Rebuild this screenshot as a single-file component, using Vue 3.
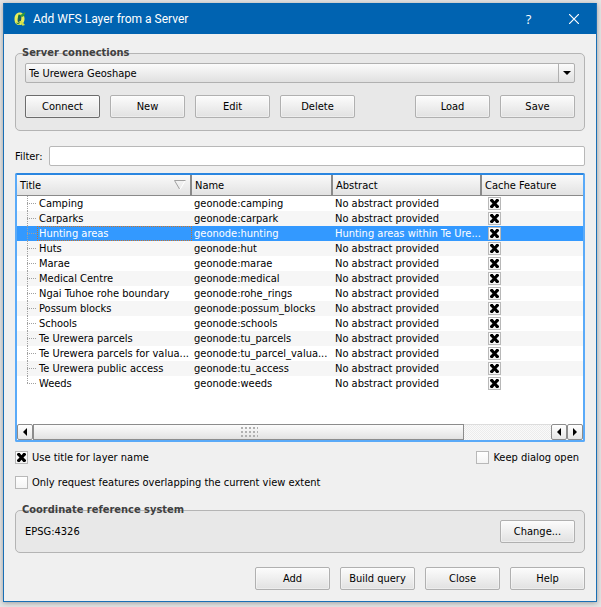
<script setup>
import { ref } from 'vue'

const connection = ref('Te Urewera Geoshape')
const filter = ref('')
const selected = ref('geonode:hunting')
const useTitle = ref(true)
const keepOpen = ref(false)
const onlyExtent = ref(false)

const none = 'No abstract provided'
const layers = ref([
  { title: 'Camping', name: 'geonode:camping', abstract: none, cache: true },
  { title: 'Carparks', name: 'geonode:carpark', abstract: none, cache: true },
  { title: 'Hunting areas', name: 'geonode:hunting', abstract: 'Hunting areas within Te Ure...', cache: true },
  { title: 'Huts', name: 'geonode:hut', abstract: none, cache: true },
  { title: 'Marae', name: 'geonode:marae', abstract: none, cache: true },
  { title: 'Medical Centre', name: 'geonode:medical', abstract: none, cache: true },
  { title: 'Ngai Tuhoe rohe boundary', name: 'geonode:rohe_rings', abstract: none, cache: true },
  { title: 'Possum blocks', name: 'geonode:possum_blocks', abstract: none, cache: true },
  { title: 'Schools', name: 'geonode:schools', abstract: none, cache: true },
  { title: 'Te Urewera parcels', name: 'geonode:tu_parcels', abstract: none, cache: true },
  { title: 'Te Urewera parcels for valua...', name: 'geonode:tu_parcel_valua...', abstract: none, cache: true },
  { title: 'Te Urewera public access', name: 'geonode:tu_access', abstract: none, cache: true },
  { title: 'Weeds', name: 'geonode:weeds', abstract: none, cache: true },
])
</script>

<template>
  <main class="dialog">
    <header class="titlebar">
      <svg class="logo" viewBox="0 0 14 16" aria-hidden="true">
        <path d="M8 1.500C4 1 1.500 3.500 1.500 8s2 6 5 6 5-2.500 5-6.500c0-2-1-4-2-5z" fill="#e8ee5a" />
        <ellipse cx="6.500" cy="7.800" rx="1.800" ry="4" fill="#1d5f66" transform="rotate(8 6.500 7.800)" />
        <path d="M6.500 4.500 12.500 1l-1.500 4-2 1z" fill="#2f9a3c" />
        <path d="M6 10 8.500 10l3.500 4-2.500.8z" fill="#cfe04a" />
        <path d="M6 3.500 5.500 8M3.500 12l3 1" stroke="#1f7a35" fill="none" />
      </svg>
      <h1>Add WFS Layer from a Server</h1>
      <button class="cap help" aria-label="Context help">?</button>
      <button class="cap" aria-label="Close window">
        <svg width="10" height="10" viewBox="0 0 10 10"><path d="M0 0 10 10M10 0 0 10" stroke="#fff" stroke-width="1.200" /></svg>
      </button>
    </header>

    <div class="body">
      <fieldset class="group">
        <legend>Server connections</legend>
        <div class="combo">
          <select v-model="connection" aria-label="Server connection">
            <option>Te Urewera Geoshape</option>
          </select>
          <svg class="arrow" viewBox="0 0 8 4" aria-hidden="true"><path d="M0 0h8L4 4z" /></svg>
        </div>
        <div class="buttons">
          <button class="btn primary">Connect</button>
          <button class="btn">New</button>
          <button class="btn">Edit</button>
          <button class="btn">Delete</button>
          <span class="spacer"></span>
          <button class="btn">Load</button>
          <button class="btn">Save</button>
        </div>
      </fieldset>

      <div class="filter">
        <label for="filter">Filter:</label>
        <input id="filter" v-model="filter" type="text" />
      </div>

      <div class="tree">
        <table>
          <colgroup>
            <col class="c-title" /><col class="c-name" /><col class="c-abstract" /><col />
          </colgroup>
          <thead>
            <tr>
              <th>
                <span class="sorted">Title
                  <svg width="12" height="10" viewBox="0 0 12 10" aria-hidden="true">
                    <path d="M11 1 6 9.500" stroke="#fff" fill="none" />
                    <path d="M11.500.5H.5L5.500 9" stroke="#a0a0a0" fill="none" />
                  </svg>
                </span>
              </th>
              <th>Name</th>
              <th>Abstract</th>
              <th>Cache Feature</th>
            </tr>
          </thead>
          <tbody>
            <tr v-for="l in layers" :key="l.name" :class="{ selected: l.name === selected }" @click="selected = l.name">
              <td class="title"><span class="item">{{ l.title }}</span></td>
              <td class="name">{{ l.name }}</td>
              <td class="abstract">{{ l.abstract }}</td>
              <td class="cache"><input v-model="l.cache" type="checkbox" :aria-label="'Cache ' + l.title" /></td>
            </tr>
          </tbody>
        </table>
        <div class="scrollbar">
          <button class="step" aria-label="Scroll left"><svg width="4" height="8" viewBox="0 0 4 8"><path d="M4 0v8L0 4z" /></svg></button>
          <div class="thumb"><span class="grip"></span></div>
          <div class="track"></div>
          <button class="step" aria-label="Scroll left"><svg width="4" height="8" viewBox="0 0 4 8"><path d="M4 0v8L0 4z" /></svg></button>
          <button class="step" aria-label="Scroll right"><svg width="4" height="8" viewBox="0 0 4 8"><path d="M0 0v8l4-4z" /></svg></button>
        </div>
      </div>

      <div class="options">
        <label><input v-model="useTitle" type="checkbox" />Use title for layer name</label>
        <label class="keep"><input v-model="keepOpen" type="checkbox" />Keep dialog open</label>
      </div>
      <div class="options second">
        <label><input v-model="onlyExtent" type="checkbox" />Only request features overlapping the current view extent</label>
      </div>

      <fieldset class="group crs">
        <legend>Coordinate reference system</legend>
        <span>EPSG:4326</span>
        <button class="btn">Change...</button>
      </fieldset>

      <footer class="buttons actions">
        <button class="btn">Add</button>
        <button class="btn">Build query</button>
        <button class="btn">Close</button>
        <button class="btn">Help</button>
      </footer>
    </div>
  </main>
</template>

<style>
body {
  background: #e4e4e4;
}
#app {
  box-sizing: border-box;
  min-height: 100vh;
  display: flex;
  padding: 3px 4px 5px 3px;
}
</style>

<style scoped>
* {
  box-sizing: border-box;
}
.dialog {
  flex: 1;
  min-width: 0;
  display: flex;
  flex-direction: column;
  border: 1px solid #1a6fb5;
  border-top: 0;
  background: #f0f0f0;
  box-shadow: 0 1px 5px #00000050;
  color: #000;
  font: 11px/15px "DejaVu Sans Condensed", "DejaVu Sans", sans-serif;
}
button,
input,
select {
  font: inherit;
  color: inherit;
  margin: 0;
}
.titlebar {
  display: flex;
  align-items: center;
  height: 31px;
  padding-left: 9px;
  background: #0063b1;
  color: #fff;
}
.logo {
  width: 14px;
  height: 16px;
}
h1 {
  flex: 1;
  margin: 0 0 0 6px;
  font: 12px/16px Roboto, sans-serif;
}
.cap {
  width: 45px;
  height: 31px;
  padding: 0;
  border: 0;
  background: none;
  display: grid;
  place-items: center;
}
.help {
  font: 13px/16px "Open Sans", sans-serif;
}
.body {
  flex: 1;
  display: flex;
  flex-direction: column;
  padding: 19px 11px 11px;
}
.group {
  position: relative;
  min-width: 0;
  margin: 0;
  padding: 9px;
  border: 1px solid #b4b4b4;
  border-radius: 5px;
  background: #e8e8e8;
}
.group:first-child {
  padding-bottom: 12px;
}
legend {
  position: absolute;
  top: -9px;
  left: 6px;
  padding: 0;
  font-weight: bold;
  color: #404040;
}
.combo {
  position: relative;
}
select {
  display: block;
  width: 100%;
  height: 20px;
  padding: 0 20px 0 3px;
  appearance: none;
  border: 1px solid #b0b0b0;
  border-radius: 2px;
  background: linear-gradient(#fbfbfb, #e0e0e0);
}
.combo::after {
  content: "";
  position: absolute;
  top: 1px;
  right: 16px;
  bottom: 1px;
  border-left: 1px solid #b0b0b0;
}
.arrow {
  position: absolute;
  right: 4px;
  top: 8px;
  width: 8px;
  height: 4px;
  pointer-events: none;
}
.buttons {
  display: flex;
  gap: 10px;
  margin-top: 12px;
}
.spacer {
  flex: 1;
}
.btn {
  width: 75px;
  height: 23px;
  padding: 0;
  border: 1px solid #b0b0b0;
  border-radius: 2px;
  background: linear-gradient(#fcfcfc, #e1e1e1);
  box-shadow: inset 0 0 0 1px #ffffff60;
}
.primary {
  border-color: #6c6c6c;
}
.filter {
  display: flex;
  align-items: center;
  gap: 6px;
  margin-top: 15px;
}
.filter input {
  flex: 1;
  min-width: 0;
  height: 20px;
  padding: 0 4px;
  border: 1px solid #b8b8b8;
  border-radius: 2px;
  background: #fff;
}
.tree {
  flex: 1;
  display: flex;
  flex-direction: column;
  margin-top: 7px;
  border: 2px solid #5aaaf8;
  border-top-color: #2a86e0;
  border-radius: 2px;
  background: #fff;
}
table {
  width: 100%;
  table-layout: fixed;
  border-collapse: separate;
  border-spacing: 0;
}
.c-title {
  width: 175px;
}
.c-name {
  width: 141px;
}
.c-abstract {
  width: 149px;
}
th {
  height: 21px;
  padding: 0 4px 0 3px;
  border-right: 2px solid #8a8a8a;
  border-bottom: 1px solid #8a8a8a;
  background: linear-gradient(#fafafa, #e2e2e2);
  font-weight: normal;
  text-align: left;
}
th:last-child {
  border-right: 0;
}
.sorted {
  display: flex;
  justify-content: space-between;
  align-items: center;
}
td {
  height: 15px;
  padding: 0;
  line-height: 15px;
  white-space: nowrap;
}
tbody tr:nth-child(even) {
  background: #f6f6f6;
}
tbody tr.selected {
  background: #3399ff;
  color: #fff;
}
.title {
  padding-left: 20px;
  background:
    repeating-linear-gradient(90deg, #a0a0a0 0 1px, transparent 1px 2px) 10px 7px / 9px 1px no-repeat,
    repeating-linear-gradient(#a0a0a0 0 1px, transparent 1px 2px) 10px 0 / 1px 15px no-repeat;
}
tr:last-child .title {
  background-size: 9px 1px, 1px 7px;
}
.item {
  display: block;
  padding-left: 2px;
}
.selected .item {
  outline: 1px dotted #c8742c;
  outline-offset: -1px;
}
.name,
.abstract {
  padding-left: 2px;
}
.cache {
  padding-left: 6px;
}
input[type="checkbox"] {
  appearance: none;
  display: block;
  flex: none;
  width: 13px;
  height: 13px;
  border: 1px solid #b8b8b8;
  background: linear-gradient(#fff, #f4f4f4);
}
input[type="checkbox"]:checked::after {
  content: "";
  display: block;
  width: 9px;
  height: 9px;
  margin: 1px;
  background: #000;
  clip-path: polygon(0 10%, 10% 0, 30% 0, 50% 24%, 70% 0, 90% 0, 100% 10%, 100% 22%, 72% 50%, 100% 78%, 100% 90%, 90% 100%, 70% 100%, 50% 76%, 30% 100%, 10% 100%, 0 90%, 0 78%, 28% 50%, 0 22%);
}
.scrollbar {
  display: flex;
  height: 16px;
  margin-top: auto;
}
.step {
  display: grid;
  place-items: center;
  flex: none;
  width: 16px;
  padding: 0;
  border: 1px solid #8c8c8c;
  border-radius: 2px;
  background: linear-gradient(#fff, #e6e6e6);
}
.thumb {
  flex: 431;
  display: grid;
  place-items: center;
  border: 1px solid #8c8c8c;
  background: linear-gradient(#fcfcfc, #e2e2e2);
}
.grip {
  width: 19px;
  height: 10px;
  background: repeating-conic-gradient(#b0b0b0 0 25%, transparent 0 100%) 0 0 / 4px 4px;
}
.track {
  flex: 88;
  border-top: 1px solid #dcdcdc;
  background: repeating-conic-gradient(#ececec 0 25%, #fafafa 0 50%) 0 0 / 2px 2px;
}
.options {
  display: flex;
  justify-content: space-between;
  margin-top: 8px;
}
.second {
  margin-top: 10px;
}
.options label {
  display: flex;
  align-items: center;
  gap: 4px;
}
.keep {
  margin-right: 6px;
}
.crs {
  display: flex;
  align-items: center;
  justify-content: space-between;
  margin-top: 20px;
}
.actions {
  justify-content: flex-end;
  margin-top: 14px;
}
</style>
